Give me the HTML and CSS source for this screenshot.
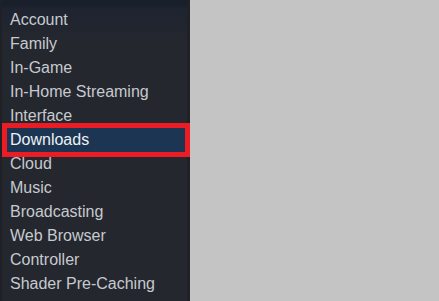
FILE: index.html
```html
<!DOCTYPE html>
<html>
<head>
<meta charset="utf-8">
<link rel="stylesheet" href="styles.css">
</head>
<body>
<div class="page">
  <nav class="sidebar">
    <ul class="menu">
      <li class="item">Account</li>
      <li class="item">Family</li>
      <li class="item">In-Game</li>
      <li class="item">In-Home Streaming</li>
      <li class="item">Interface</li>
      <li class="item selected">Downloads</li>
      <li class="item">Cloud</li>
      <li class="item">Music</li>
      <li class="item">Broadcasting</li>
      <li class="item">Web Browser</li>
      <li class="item">Controller</li>
      <li class="item">Shader Pre-Caching</li>
    </ul>
  </nav>
  <div class="content"></div>
</div>
</body>
</html>
```
FILE: styles.css
```css
html, body {
  margin: 0;
  padding: 0;
  background: #c4c4c4;
}
.page {
  display: flex;
  width: 439px;
  height: 301px;
  overflow: hidden;
}
.sidebar {
  width: 190px;
  height: 301px;
  box-sizing: border-box;
  flex: none;
  background: linear-gradient(to bottom, #1a1f2c 0px, #1a1f2c 5px, #1e2330 8px, #24272e 40px, #24272e 100%);
  border-left: 2px solid #1f2127;
  border-right: 3px solid #1f2127;
  padding: 8px 2px 0 5px;
}
.menu {
  list-style: none;
  margin: 0;
  padding: 0;
  display: flex;
  flex-direction: column;
}
.item {
  height: 24px;
  line-height: 24px;
  padding-left: 3px;
  font-family: "Liberation Sans", Arial, sans-serif;
  font-size: 16px;
  color: #c6cacf;
  white-space: nowrap;
}
.item.selected {
  background: #1b3553;
  color: #eef1f4;
  outline: 5px solid #ec1c24;
}
.content {
  flex: 1;
  background: #c4c4c4;
}
```
